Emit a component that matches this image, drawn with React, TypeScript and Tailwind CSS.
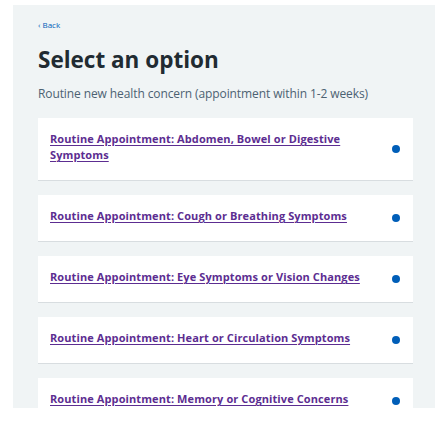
const options = [
  "Routine Appointment: Abdomen, Bowel or Digestive Symptoms",
  "Routine Appointment: Cough or Breathing Symptoms",
  "Routine Appointment: Eye Symptoms or Vision Changes",
  "Routine Appointment: Heart or Circulation Symptoms",
  "Routine Appointment: Memory or Cognitive Concerns",
];

export default function App() {
  return (
    <div className="h-[421px] w-[445px] overflow-hidden bg-white pt-[5px] pl-[13px] font-['Open_Sans',sans-serif]">
      <div className="h-[403px] w-[422px] overflow-hidden bg-[#f0f4f5] pl-[25px] pr-[22px] pt-[15px]">
        <a className="block text-[8px] leading-[10px] text-[#005eb8]">&lsaquo; Back</a>
        <h1 className="mt-[16px] text-[22.5px] font-bold leading-[28px] text-[#212b32]">
          Select an option
        </h1>
        <p className="mt-[12px] text-[12px] leading-[16px] tracking-[-0.1px] text-[#4c6272]">
          Routine new health concern (appointment within 1-2 weeks)
        </p>
        <div className="mt-[16px] flex flex-col gap-[15px]">
          {options.map((o) => (
            <div
              key={o}
              className="flex items-center bg-white pl-[12px] pr-[13px] shadow-[0_1px_0_#d8dde0]"
            >
              <div className="flex-1 pt-[13px] pb-[17px] pr-[30px] text-[11px] leading-[16px]">
                <a className="font-bold tracking-[0.1px] text-[#5c2d91] underline decoration-1 underline-offset-2">
                  {o}
                </a>
              </div>
              <span className="h-[8px] w-[8px] rounded-full bg-[#005eb8]" />
            </div>
          ))}
        </div>
      </div>
    </div>
  );
}
